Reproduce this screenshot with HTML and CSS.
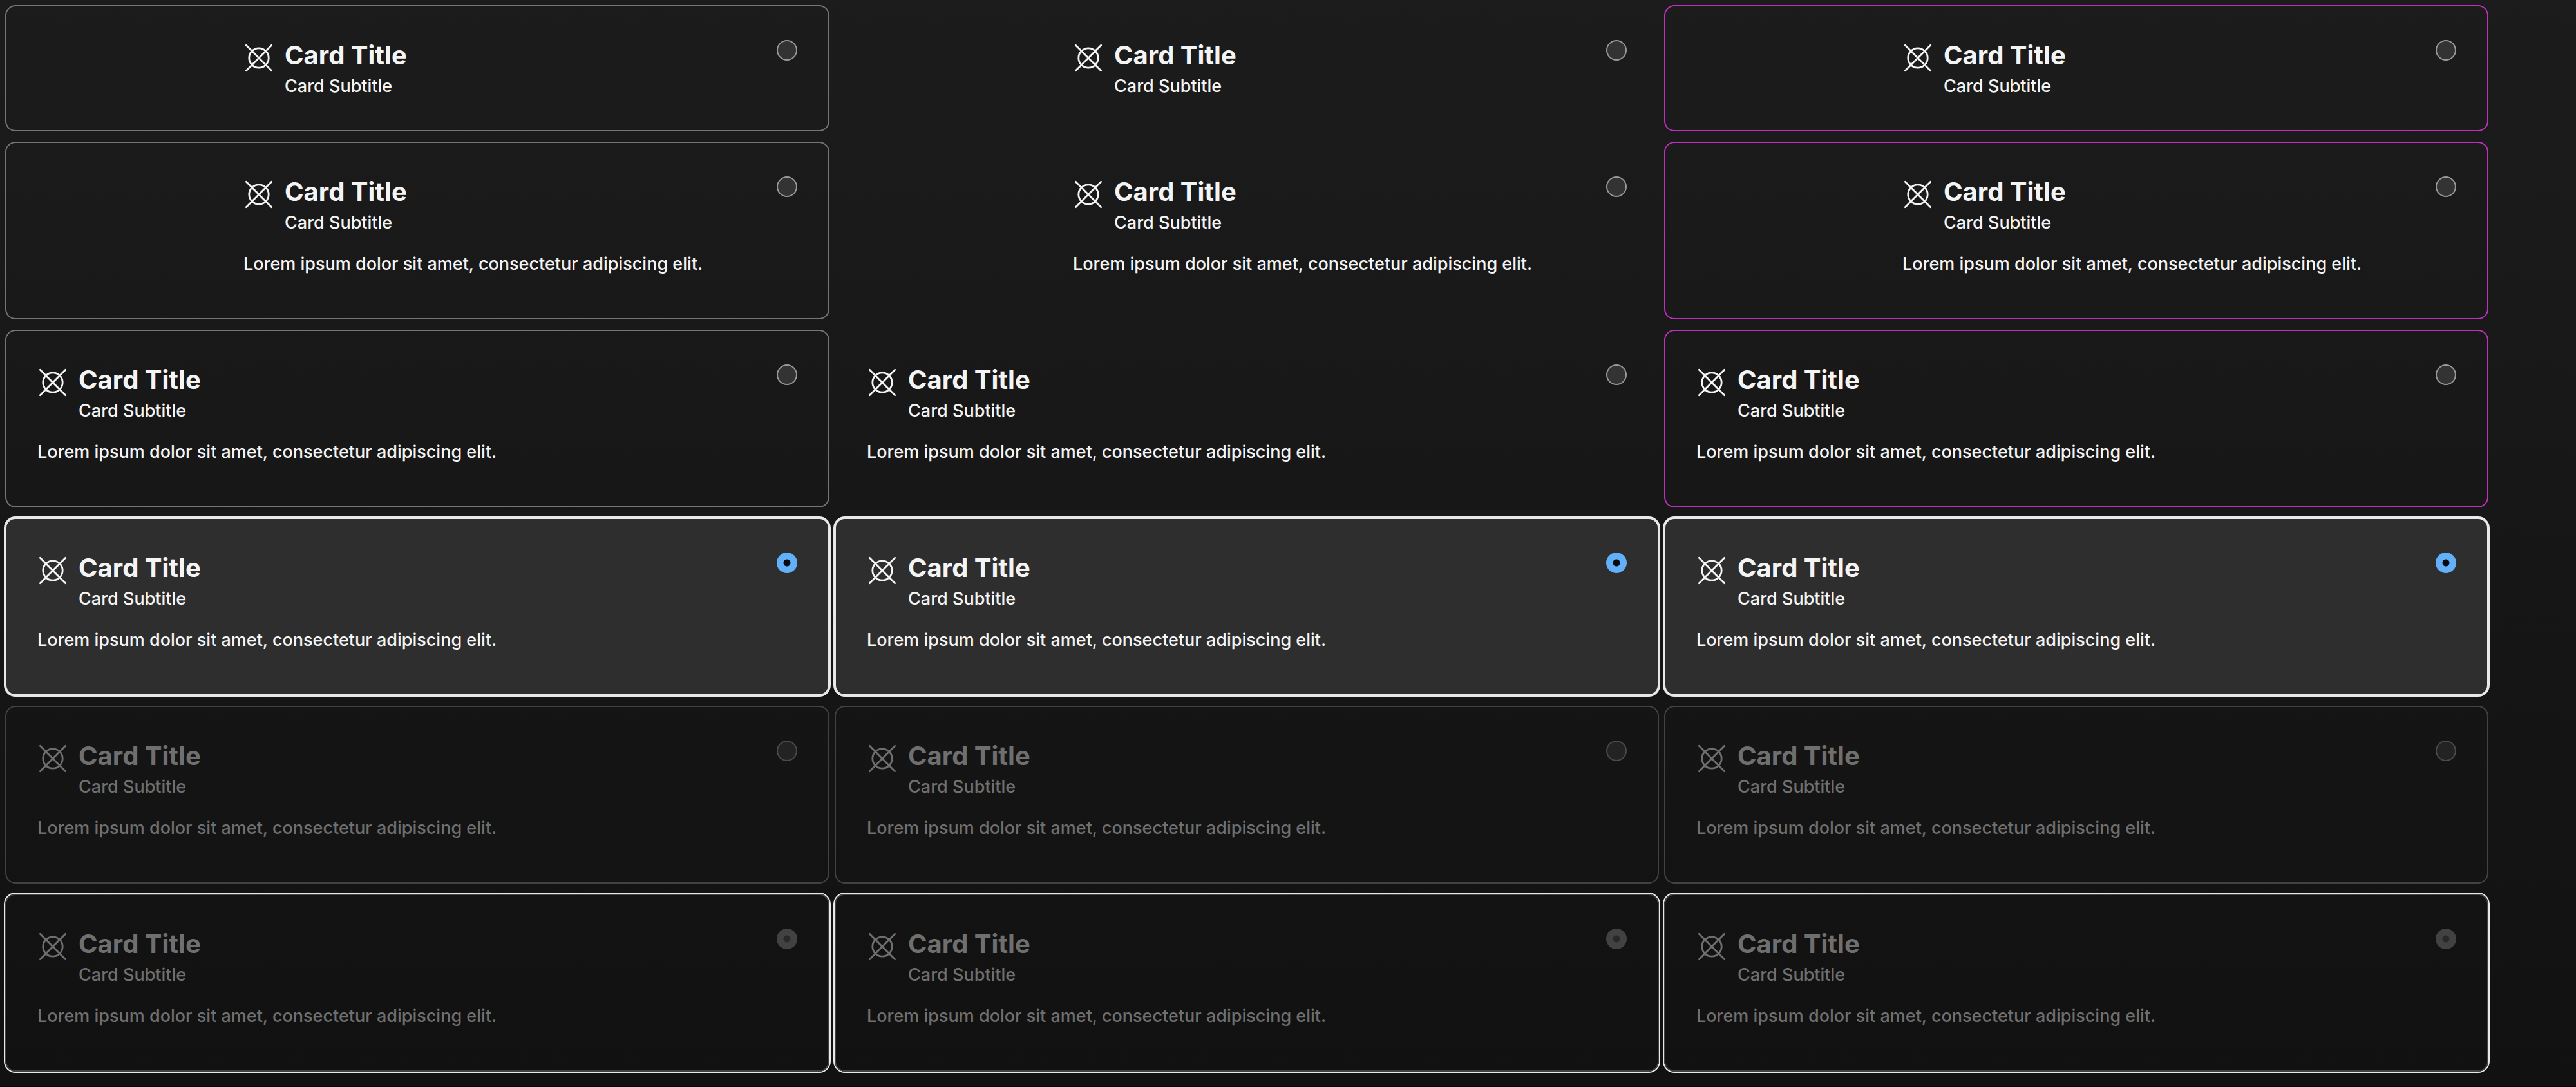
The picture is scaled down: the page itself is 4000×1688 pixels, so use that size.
FILE: index.html
```html
<!DOCTYPE html>
<html lang="en">
<head>
<meta charset="utf-8">
<title>Selectable cards</title>
<link rel="stylesheet" href="styles.css">
</head>
<body>
<svg class="sprite" aria-hidden="true">
  <symbol id="icon" viewBox="0 0 48 48">
    <g fill="none" stroke="currentColor" stroke-width="2.8" stroke-linecap="round">
      <circle cx="24" cy="24" r="15.2"/>
      <path d="M4.3 4.3L43.7 43.7M43.7 4.3L4.3 43.7"/>
    </g>
  </symbol>
</svg>
<main class="cards" id="cards"></main>
<script src="cards.js"></script>
</body>
</html>
```

FILE: styles.css
```css
* {
  box-sizing: border-box;
}

html {
  background: #0c050c;
}

body {
  margin: 0;
  min-height: calc(100vh - 2px);
  background: linear-gradient(#1c1c1c, #111111);
  color: #f4f4f4;
  font-family: Inter, "Liberation Sans", sans-serif;
  font-size: 27px;
  font-weight: 500;
  line-height: 40px;
}

.sprite {
  display: none;
}

.cards {
  display: grid;
  grid-template-columns: repeat(3, 1fr);
  gap: 16px 8px;
  padding: 8px 136px 22px 8px;
}

.card {
  display: grid;
  padding: 48px;
  border: 2px solid #757575;
  border-radius: 16px;
}

.card > * {
  grid-area: 1 / 1;
}

.card.plain {
  border-color: transparent;
}

.card.custom {
  border-color: #c02fc0;
}

.card.selected {
  background: #2e2e2e;
  border-color: #e8e8e8;
  box-shadow: 0 0 0 2px #e8e8e8;
}

.card.disabled {
  border-color: #424242;
  color: #6f6f6f;
}

.card.disabled.selected {
  background: none;
}

.content {
  white-space: nowrap;
}

.centered .content {
  width: 540px;
  margin: 0 auto;
}

.header {
  display: grid;
  grid-template-columns: 48px 1fr;
  column-gap: 16px;
}

.icon {
  width: 48px;
  height: 48px;
  margin-top: 8px;
}

.title {
  margin: 0;
  font-size: 40px;
  font-weight: 700;
  line-height: 56px;
}

.subtitle,
.body {
  margin: 0;
}

.body {
  padding: 24px 0 16px;
}

.radio {
  appearance: none;
  justify-self: end;
  width: 32px;
  height: 32px;
  margin: 4px 0 0;
  border: 2px solid #999999;
  border-radius: 50%;
  background: #333333;
}

.radio:checked {
  border: 0;
  background: radial-gradient(circle, #060a10 5px, #62b0f8 6px);
}

.radio:disabled {
  border-color: #4b4b4b;
  background: #232323;
}

.radio:disabled:checked {
  background: radial-gradient(circle, #292929 5px, #424242 6px);
}
```

FILE: cards.js
```js
const rows = [
  { centered: true, body: false, variants: ["", "plain", "custom"] },
  { centered: true, body: true, variants: ["", "plain", "custom"] },
  { body: true, variants: ["", "plain", "custom"] },
  { body: true, checked: true, variants: ["selected", "selected", "selected"] },
  { body: true, disabled: true, variants: ["disabled", "disabled", "disabled"] },
  { body: true, checked: true, disabled: true, variants: ["disabled selected", "disabled selected", "disabled selected"] }
];

document.getElementById("cards").innerHTML = rows.map((row, r) =>
  row.variants.map((variant, c) => `
    <label class="card ${variant} ${row.centered ? "centered" : ""}" for="card-${r}-${c}">
      <div class="content">
        <div class="header">
          <svg class="icon" aria-hidden="true"><use href="#icon"/></svg>
          <div>
            <h2 class="title">Card Title</h2>
            <p class="subtitle">Card Subtitle</p>
          </div>
        </div>
        ${row.body ? '<p class="body">Lorem ipsum dolor sit amet, consectetur adipiscing elit.</p>' : ""}
      </div>
      <input class="radio" type="radio" id="card-${r}-${c}" name="group-${r}-${c}"
        ${row.checked ? "checked" : ""} ${row.disabled ? "disabled" : ""}>
    </label>`).join("")
).join("");
```
